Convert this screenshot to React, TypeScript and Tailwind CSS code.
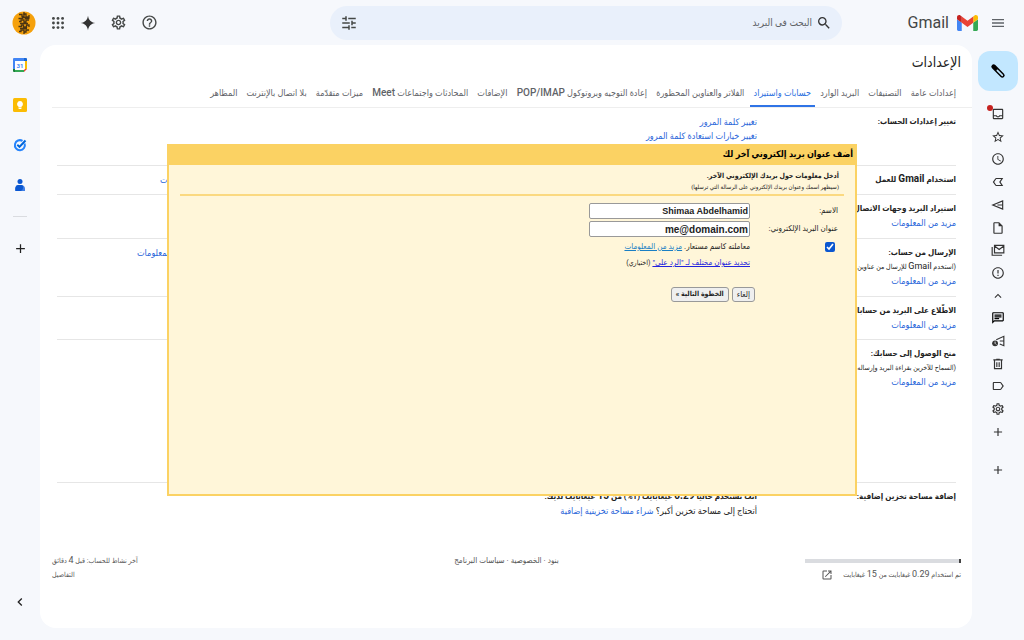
import type { ReactNode } from "react";
import {
  MdAccessTime,
  MdAdd,
  MdErrorOutline,
  MdHelpOutline,
  MdKeyboardArrowUp,
  MdKeyboardArrowLeft,
  MdLabelImportantOutline,
  MdLabelOutline,
  MdMenu,
  MdOutlineChat,
  MdOutlineInbox,
  MdOutlineInsertDriveFile,
  MdOpenInNew,
  MdOutlineSettings,
  MdSearch,
  MdStarBorder,
  MdTune,
} from "react-icons/md";

const TABS: { id: string; label: ReactNode; active?: boolean }[] = [
  { id: "general", label: "إعدادات عامة" },
  { id: "labels", label: "التصنيفات" },
  { id: "inbox", label: "البريد الوارد" },
  { id: "accounts", label: "حسابات واستيراد", active: true },
  { id: "filters", label: "الفلاتر والعناوين المحظورة" },
  { id: "pop", label: <>إعادة التوجيه وبروتوكول <Latin>POP/IMAP</Latin></> },
  { id: "addons", label: "الإضافات" },
  { id: "chat", label: <>المحادثات واجتماعات <Latin>Meet</Latin></> },
  { id: "advanced", label: "ميزات متقدّمة" },
  { id: "offline", label: "بلا اتصال بالإنترنت" },
  { id: "themes", label: "المظاهر" },
];

function Latin({ children }: { children: ReactNode }) {
  return <span className="text-[10px] leading-none font-medium">{children}</span>;
}

function Link({ children }: { children: ReactNode }) {
  return (
    <a href="#" className="text-[#2a66d9]">
      {children}
    </a>
  );
}

function AppsIcon() {
  return (
    <svg viewBox="0 0 28 28" className="size-4" fill="#444746">
      {[6, 14, 22].map((y) => [6, 14, 22].map((x) => <circle key={`${x}-${y}`} cx={x} cy={y} r="2.5" />))}
    </svg>
  );
}

function GmailLogo() {
  return (
    <svg viewBox="52 42 88 66" className="h-4 w-[21px]">
      <path fill="#4285f4" d="M58 108h14V74L52 59v43c0 3.32 2.69 6 6 6" />
      <path fill="#34a853" d="M120 108h14c3.32 0 6-2.69 6-6V59l-20 15" />
      <path fill="#fbbc04" d="M120 48v26l20-15v-8c0-7.42-8.47-11.65-14.4-7.2" />
      <path fill="#ea4335" d="M72 74V48l24 18 24-18v26L96 92" />
      <path fill="#c5221f" d="M52 51v8l20 15V48l-5.6-4.2c-5.94-4.45-14.4-.22-14.4 7.2" />
    </svg>
  );
}

function Avatar() {
  return (
    <svg viewBox="0 0 24 24" className="size-6">
      <circle cx="12" cy="12" r="11.5" fill="#f5a10c" />
      <g stroke="#4a3412" strokeWidth="1.3" fill="none">
        <path d="M7 3.500h3v2h2v-2.500h2v3h3v-2M6.500 7.500h4v-1h3v1h4" />
        <path d="M7 10.500h2v-1.500h3v2h2v-2h3M8 12.500h8" />
        <path d="M6.500 15.500h3v-1.500h2v2h3v-2h2.500v2M8 17.500h7" />
        <path d="M7 20.500h2v-1.500h3v2h2v-2h3M12 1v3M12 20v3" />
      </g>
    </svg>
  );
}

function CalendarIcon() {
  return (
    <svg viewBox="0 0 14 14" className="size-[14px]">
      <path fill="#4285f4" d="M1 0h10v3H3v8H0V1a1 1 0 0 1 1-1" />
      <path fill="#1967d2" d="M11 0h2a1 1 0 0 1 1 1v2h-3z" />
      <path fill="#fbbc04" d="M12 3h2v8h-2z" />
      <path fill="#34a853" d="M2 12h9v2H2z" />
      <path fill="#188038" d="M0 11h2v3H1a1 1 0 0 1-1-1z" />
      <path fill="#4285f4" d="M0 3h2v8H0z" />
      <path fill="#ea4335" d="M11 11h3l-3 3z" />
      <path fill="#fff" d="M2 3h10v8l-1 1H2z" />
      <text x="7" y="9.800" fontSize="6" textAnchor="middle" fill="#4285f4" fontWeight="bold" fontFamily="Roboto">31</text>
    </svg>
  );
}

function KeepIcon() {
  return (
    <svg viewBox="0 0 14 14" className="size-[14px]">
      <rect width="14" height="14" rx="1.500" fill="#fbbc04" />
      <path fill="#fff" d="M7 3a3 3 0 0 0-1.600 5.500V9.400h3.200v-.9A3 3 0 0 0 7 3M5.600 10h2.800v1H5.600z" />
    </svg>
  );
}

function TasksIcon() {
  return (
    <svg viewBox="0 0 14 14" className="size-[14px]" fill="none">
      <path d="M11.600 5.500A5 5 0 1 1 9.500 2.900" stroke="#2684fc" strokeWidth="2" />
      <path d="M4.300 6.800l2.200 2.100 6-6.400" stroke="#0066da" strokeWidth="2" />
    </svg>
  );
}

function ContactsIcon() {
  return (
    <svg viewBox="0 0 14 14" className="size-[14px]">
      <circle cx="7" cy="3.500" r="2.500" fill="#0b57d0" />
      <path fill="#3f7fe6" d="M2 13v-2.500C2 8 4 7 7 7s5 1 5 3.500V13z" />
      <path fill="#0b57d0" d="M3.500 7.500C5 7 8 7 9.500 7.300c1.500 2 0 5.700-2 5.700H3c-1-2-.5-4 .5-5.500" />
    </svg>
  );
}

function ComposeIcon() {
  return (
    <svg viewBox="0 0 24 24" className="size-4" fill="none" strokeLinecap="round">
      <path d="M5.500 5.500l13 13" stroke="#000" strokeWidth="7" />
      <path d="M11 11l7.500 7.500" stroke="#c2e7ff" strokeWidth="2.500" />
    </svg>
  );
}

function SentIcon() {
  return (
    <svg viewBox="0 0 24 24" className="size-[14px]" fill="none" stroke="currentColor" strokeWidth="2">
      <path d="M3 12l17-7v14zM20 12h-9" />
    </svg>
  );
}

function AllMailIcon() {
  return (
    <svg viewBox="0 0 24 24" className="size-[14px]" fill="none" stroke="currentColor" strokeWidth="2">
      <path d="M6 4h16v13H6zM6 5l8 6 8-6M2 7v14h17" />
    </svg>
  );
}

function ScheduledIcon() {
  return (
    <svg viewBox="0 0 24 24" className="size-[14px]" fill="none" stroke="currentColor" strokeWidth="2">
      <path d="M9 10l13-6v16l-7-3M22 12h-7" />
      <circle cx="7" cy="16" r="5" fill="currentColor" stroke="none" />
      <path d="M7 13v3l2 2" stroke="#f6f8fc" strokeWidth="1.500" />
    </svg>
  );
}

function TrashIcon() {
  return (
    <svg viewBox="0 0 24 24" className="size-[14px]" fill="none" stroke="currentColor" strokeWidth="2">
      <path d="M4 5h16M9 4h6M6 5v15h12V5M10 9v8M14 9v8" />
    </svg>
  );
}

const NAV: { name: string; icon: ReactNode; dot?: boolean }[] = [
  { name: "البريد الوارد", icon: <MdOutlineInbox />, dot: true },
  { name: "مميّز بنجمة", icon: <MdStarBorder /> },
  { name: "مؤجّل", icon: <MdAccessTime /> },
  { name: "مهم", icon: <MdLabelImportantOutline className="-scale-x-100" /> },
  { name: "مرسل", icon: <SentIcon /> },
  { name: "مسودات", icon: <MdOutlineInsertDriveFile /> },
  { name: "كل البريد", icon: <AllMailIcon /> },
  { name: "غير مرغوب فيه", icon: <MdErrorOutline /> },
  { name: "أقل", icon: <MdKeyboardArrowUp /> },
  { name: "المحادثات", icon: <MdOutlineChat className="stroke-current text-black" /> },
  { name: "مُجدوَل", icon: <ScheduledIcon /> },
  { name: "المهملات", icon: <TrashIcon /> },
  { name: "الفئات", icon: <MdLabelOutline /> },
  { name: "إدارة التصنيفات", icon: <MdOutlineSettings className="stroke-current" /> },
  { name: "تصنيف جديد", icon: <MdAdd /> },
];

function Header() {
  return (
    <header className="flex h-[45px] items-center pr-[18px] pl-3">
      <div className="flex w-[164px] shrink-0 items-center">
        <button aria-label="القائمة الرئيسية">
          <MdMenu className="size-4 text-[#5f6368]" />
        </button>
        <div className="mr-3 flex items-center gap-2" dir="ltr">
          <span className="font-[Roboto] text-[16px] text-[#444746]">Gmail</span>
          <GmailLogo />
        </div>
      </div>
      <form className="flex h-[34px] w-[50vw] shrink-0 items-center rounded-full bg-[#e9f0fb] px-[10px]">
        <button type="button" aria-label="بحث">
          <MdSearch className="size-4 text-[#333]" />
        </button>
        <input
          aria-label="البحث في البريد"
          placeholder="البحث في البريد"
          className="mx-1 min-w-0 flex-1 bg-transparent text-[10px] outline-none placeholder:text-[#5f6368]"
        />
        <button type="button" aria-label="خيارات البحث">
          <MdTune className="size-[18px] -scale-x-100 text-[#444746]" />
        </button>
      </form>
      <div className="flex flex-1 items-center justify-end gap-[14px] text-[#444746]">
        <button aria-label="مساعدة"><MdHelpOutline className="size-[17px]" /></button>
        <button aria-label="الإعدادات"><MdOutlineSettings className="size-[17px]" /></button>
        <button aria-label="Gemini">
          <svg viewBox="0 0 24 24" className="size-4" fill="#333">
            <path d="M12 1c1 6.500 4.500 10 11 11-6.500 1-10 4.500-11 11-1-6.500-4.500-10-11-11 6.500-1 10-4.500 11-11" />
          </svg>
        </button>
        <button aria-label="تطبيقات"><AppsIcon /></button>
        <button aria-label="الحساب"><Avatar /></button>
      </div>
    </header>
  );
}

function SideNav() {
  return (
    <nav className="flex w-[52px] shrink-0 flex-col items-center pt-[6px] text-[#333]">
      <button aria-label="إنشاء" className="flex size-10 items-center justify-center rounded-xl bg-[#c2e7ff]">
        <ComposeIcon />
      </button>
      <ul className="mt-[15px] flex h-[334px] flex-col justify-between">
        {NAV.map((item) => (
          <li key={item.name} className="relative flex h-4 items-center">
            <button aria-label={item.name} className="text-[14px]">{item.icon}</button>
            {item.dot && <span className="absolute -top-px -left-1 size-[6px] rounded-full bg-[#c5221f]" />}
          </li>
        ))}
      </ul>
      <button aria-label="إضافة" className="mt-[23px] text-[14px]"><MdAdd /></button>
    </nav>
  );
}

function AppRail() {
  return (
    <aside className="flex w-10 shrink-0 flex-col items-center pt-[13px] pb-[30px]">
      <div className="flex flex-col gap-[26px]">
        <a href="#" aria-label="تقويم"><CalendarIcon /></a>
        <a href="#" aria-label="Keep"><KeepIcon /></a>
        <a href="#" aria-label="مهام"><TasksIcon /></a>
        <a href="#" aria-label="جهات الاتصال"><ContactsIcon /></a>
      </div>
      <hr className="mt-6 w-[14px] border-[#dadce0]" />
      <button aria-label="الحصول على إضافات" className="mt-6 text-[15px] text-[#222]"><MdAdd /></button>
      <button aria-label="إخفاء اللوحة الجانبية" className="mt-auto text-[16px] text-[#222]"><MdKeyboardArrowLeft /></button>
    </aside>
  );
}

function Row({ title, height, children, extra }: { title: ReactNode; height: string; children?: ReactNode; extra?: ReactNode }) {
  return (
    <section className={`flex border-b border-[#e6e6e6] pt-[7px] leading-[14px] ${height}`}>
      <div className="w-[199px] shrink-0 whitespace-nowrap">
        <h2 className="text-[8px] font-bold">{title}</h2>
        {extra}
      </div>
      <div className="flex-1">{children}</div>
    </section>
  );
}

function Dialog() {
  return (
    <div
      role="dialog"
      aria-labelledby="dialog-title"
      className="absolute top-[99px] right-[115px] left-[127px] h-[352px] border-2 border-t-0 border-[#fbd263] bg-[#fff6d9]"
    >
      <h2 id="dialog-title" className="h-[21px] bg-[#fbd263] pr-[2px] text-[9px] leading-[21px] font-bold text-black">
        أضف عنوان بريد إلكتروني آخر لك
      </h2>
      <div className="mx-[11px] border-b-2 border-[#fbd980] pt-[5px] pr-[5px] pb-[3px]">
        <p className="text-[7px] leading-[12px] font-bold">أدخل معلومات حول بريدك الإلكتروني الآخر.</p>
        <p className="text-[6px] leading-[9px]">(سيظهر اسمك وعنوان بريدك الإلكتروني على الرسالة التي ترسلها)</p>
      </div>
      <form className="mt-[7px] pr-[17px] text-[8px]">
        <div className="grid grid-cols-[88px_161px] items-center gap-y-[2px]">
          <label htmlFor="name">الاسم:</label>
          <input
            id="name"
            dir="ltr"
            defaultValue="Shimaa Abdelhamid"
            className="h-4 rounded-[2px] border border-[#999] bg-white pr-px text-right font-['Liberation_Sans'] text-[9px] font-bold text-[#222]"
          />
          <label htmlFor="email">عنوان البريد الإلكتروني:</label>
          <input
            id="email"
            dir="ltr"
            defaultValue="me@domain.com"
            className="h-4 rounded-[2px] border border-[#999] bg-white pr-px text-right font-['Liberation_Sans'] text-[10px] font-bold text-[#222]"
          />
        </div>
        <div className="mt-[2px] grid grid-cols-[88px_1fr] items-center leading-4">
          <input id="alias" type="checkbox" defaultChecked className="mr-[3px] size-[10px] accent-[#0b57d0]" />
          <div>
            <label htmlFor="alias">معاملته كاسم مستعار.</label>{" "}
            <a href="#" className="text-[#1a7fc4] underline">مزيد من المعلومات</a>
          </div>
          <div className="col-start-2">
            <a href="#" className="text-[#2222dd] underline">تحديد عنوان مختلف لـ "الرد على"</a>{" "}
            <span className="text-[7px]">(اختياري)</span>
          </div>
        </div>
        <div className="mt-4 mr-[83px] flex gap-[3px]">
          <button type="button" className="h-[15px] rounded-[3px] border border-[#999] bg-[#efefef] px-1">إلغاء</button>
          <button type="button" className="h-[15px] rounded-[3px] border border-[#999] bg-[#efefef] px-1 text-[7px] font-bold">
            الخطوة التالية »
          </button>
        </div>
      </form>
    </div>
  );
}

export default function App() {
  return (
    <div
      dir="rtl"
      className="flex min-h-screen flex-col bg-[#f6f8fc] font-[Roboto,'DejaVu_Sans_Condensed','DejaVu_Sans',sans-serif] text-[9px] text-[#222]"
    >
      <Header />
      <div className="flex flex-1">
        <SideNav />
        <main className="relative mb-3 min-w-0 flex-1 rounded-2xl bg-white">
          <h1 className="pt-2 pr-[11px] text-[14px] leading-[18px]">الإعدادات</h1>
          <ul className="mt-[9px] ml-3 flex justify-between border-b border-[#eee] pr-3 pl-[154px] whitespace-nowrap text-[#5f6368]">
            {TABS.map((tab) => (
              <li key={tab.id} className={`h-[27px] px-1 leading-[27px] ${tab.active ? "border-b-2 border-[#2f74e6] text-[#2a6fe0]" : ""}`}>
                <a href="#">{tab.label}</a>
              </li>
            ))}
          </ul>
          <div className="mr-4 ml-[17px]">
            <Row height="h-[58px]" title="تغيير إعدادات الحساب:">
              <p><Link>تغيير كلمة المرور</Link></p>
              <p><Link>تغيير خيارات استعادة كلمة المرور</Link></p>
            </Row>
            <Row height="h-[29px]" title={<>استخدام <span className="text-[10px] leading-none">Gmail</span> للعمل</>}>
              <p className="pl-[103px] text-left"><Link>مزيد من المعلومات</Link></p>
            </Row>
            <Row height="h-[44px]" title="استيراد البريد وجهات الاتصال:" extra={<Link>مزيد من المعلومات</Link>} />
            <Row
              height="h-[58px]"
              title="الإرسال من حساب:"
              extra={
                <>
                  <p className="text-[7px]">(استخدم <span className="text-[9px] leading-none">Gmail</span> للإرسال من عناوين</p>
                  <Link>مزيد من المعلومات</Link>
                </>
              }
            >
              <p className="pl-20 text-left"><Link>مزيد من المعلومات</Link></p>
            </Row>
            <Row height="h-[43px]" title="الاطّلاع على البريد من حسابات" extra={<Link>مزيد من المعلومات</Link>} />
            <Row
              height="h-[143px]"
              title="منح الوصول إلى حسابك:"
              extra={
                <>
                  <p className="text-[7px]">(السماح للآخرين بقراءة البريد وإرساله</p>
                  <Link>مزيد من المعلومات</Link>
                </>
              }
            />
            <section className="flex pt-[7px] leading-[14px]">
              <h2 className="w-[199px] shrink-0 text-[8px] font-bold">إضافة مساحة تخزين إضافية:</h2>
              <div>
                <p className="text-[8px] font-bold">
                  أنت تستخدم حاليًا <span className="text-[10px] leading-none">0.29</span> غيغابايت (1%) من{" "}
                  <span className="text-[10px] leading-none">15</span> غيغابايت لديك.
                </p>
                <p>أتحتاج إلى مساحة تخزين أكبر؟ <Link>شراء مساحة تخزينية إضافية</Link></p>
              </div>
            </section>
          </div>
          <footer className="mt-9 mr-[11px] ml-3 grid grid-cols-3 text-[7px] leading-[14px] text-[#555]">
            <div className="pt-[5px]">
              <div className="h-1 w-[156px] bg-[#dadce0]">
                <div className="h-1 w-[2px] bg-[#444]" />
              </div>
              <p className="mt-[5px] flex items-center gap-[10px]">
                <span>
                  تم استخدام <span className="text-[9px] leading-none">0.29</span> غيغابايت من{" "}
                  <span className="text-[9px] leading-none">15</span> غيغابايت
                </span>
                <a href="#" aria-label="إدارة"><MdOpenInNew className="size-3" /></a>
              </p>
            </div>
            <p className="text-center text-[8px]">بنود · الخصوصية · سياسات البرنامج</p>
            <div className="text-left">
              <p>آخر نشاط للحساب: قبل <span className="text-[9px] leading-none">4</span> دقائق</p>
              <p>التفاصيل</p>
            </div>
          </footer>
          <Dialog />
        </main>
        <AppRail />
      </div>
    </div>
  );
}
